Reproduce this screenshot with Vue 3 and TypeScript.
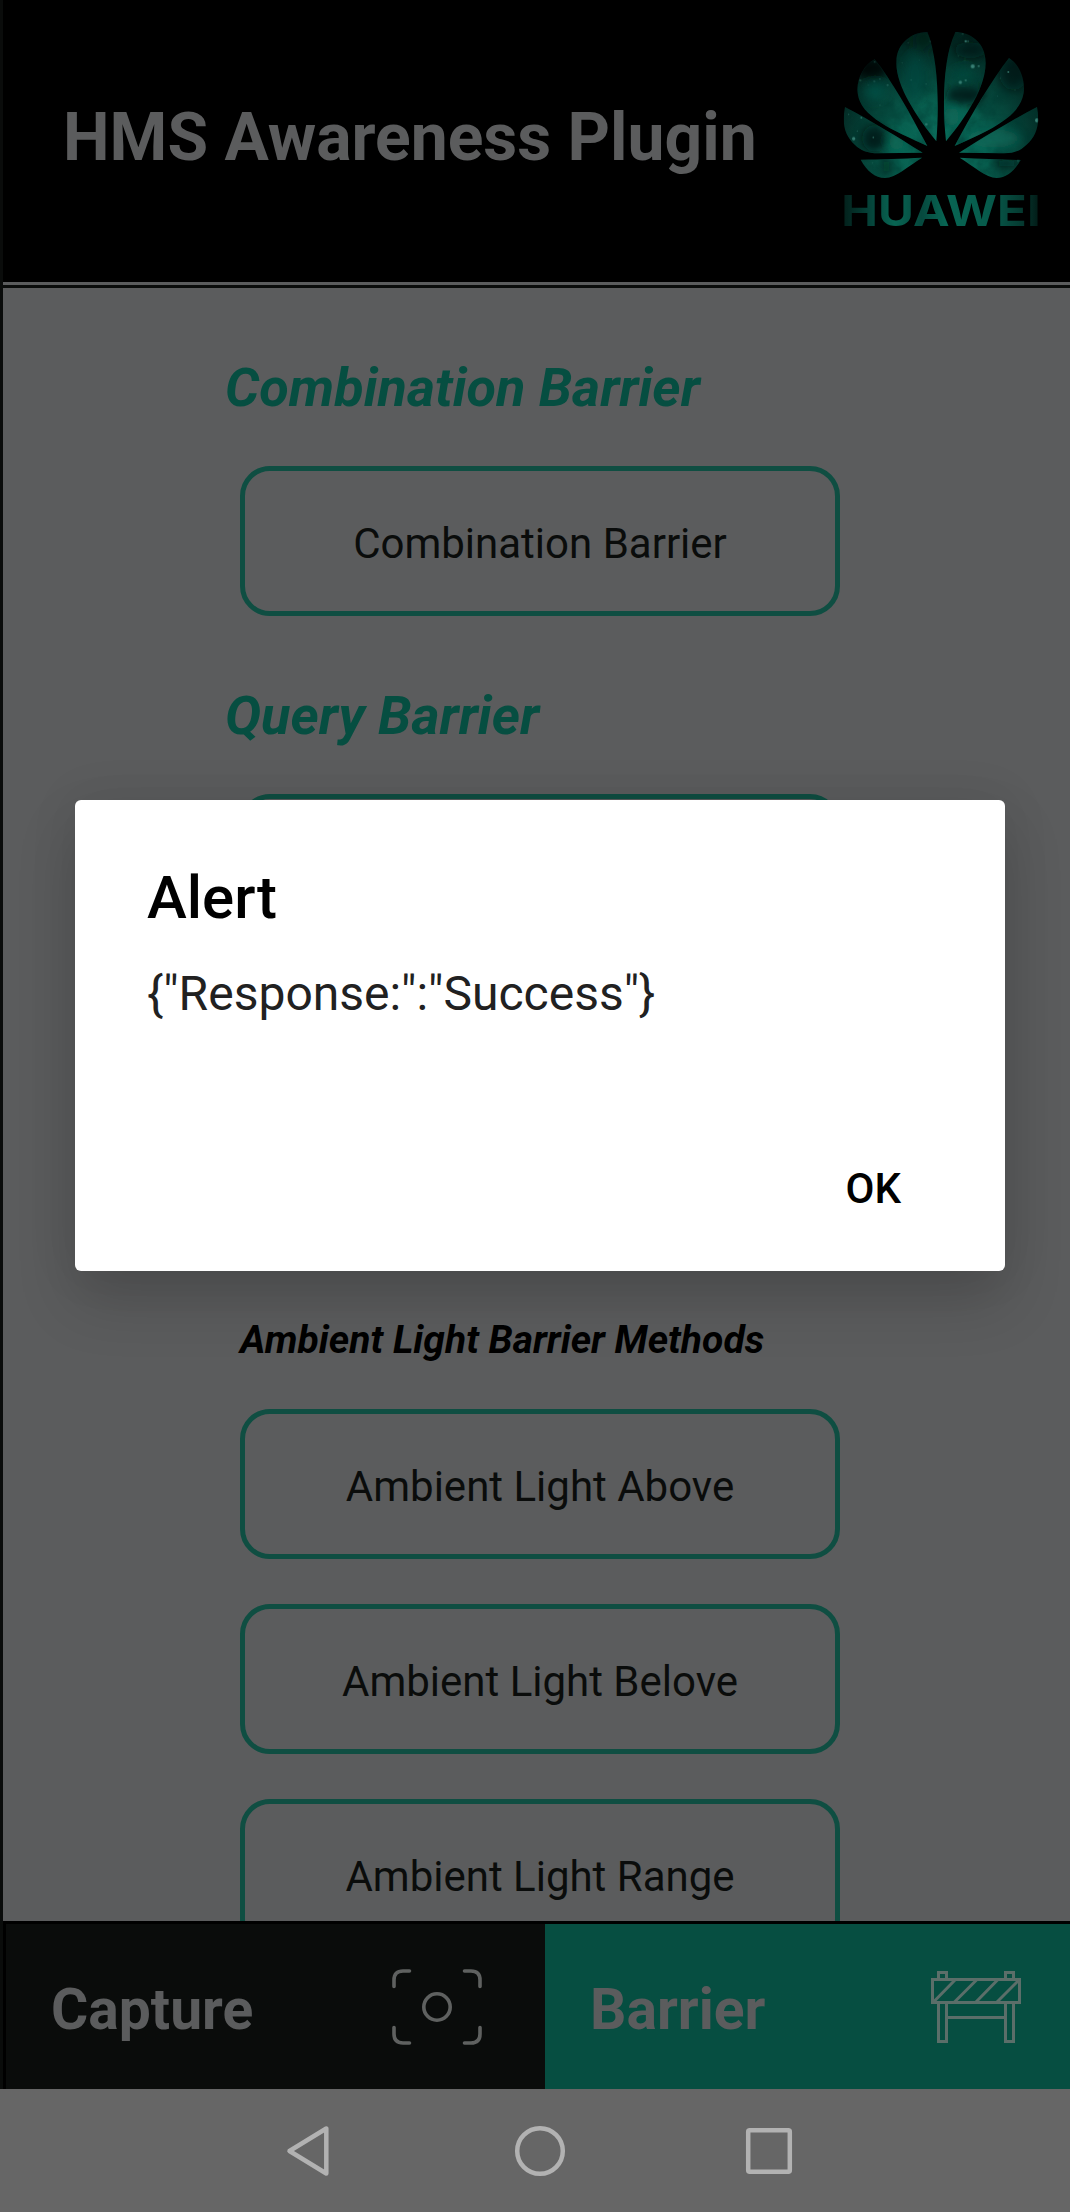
<script setup lang="ts">
interface Star {
  x: number
  y: number
  r: number
  o: number
}

const lightBarriers: string[] = ['Ambient Light Above', 'Ambient Light Belove', 'Ambient Light Range']

const petals: string[] = [
  'M349 394 C357 300 357 150 322 66 C280 66 228 95 229 160 C229 230 290 320 349 394 Z',
  'M378 394 C368 300 366 150 406 66 C448 66 498 95 497 160 C497 230 440 320 378 394 Z',
  'M322 408 C270 310 215 210 164 148 C130 165 108 210 113 250 C120 320 220 362 322 408 Z',
  'M404 408 C456 310 515 210 567 144 C600 165 616 210 611 250 C600 320 508 362 404 408 Z',
  'M308 428 C230 380 150 330 75 291 C66 340 72 375 105 405 C122 421 142 430 175 430 Z',
  'M417 428 C495 380 575 330 651 291 C660 340 652 375 619 405 C602 421 585 430 552 430 Z',
  'M306 443 C250 446 180 448 122 449 C140 482 165 504 195 504 C228 504 265 468 306 443 Z',
  'M419 443 C480 446 545 448 602 450 C584 482 560 504 530 504 C498 504 460 468 419 443 Z',
]

const stars: Star[] = [
  { x: 458, y: 169, r: 6, o: 0.9 },
  { x: 476, y: 168, r: 3, o: 0.8 },
  { x: 421, y: 217, r: 5, o: 0.8 },
  { x: 437, y: 211, r: 3, o: 0.7 },
  { x: 437, y: 94, r: 3.5, o: 0.8 },
  { x: 444, y: 94, r: 2.5, o: 0.8 },
  { x: 428, y: 72, r: 2, o: 0.6 },
  { x: 415, y: 138, r: 1.5, o: 0.5 },
  { x: 434, y: 152, r: 1.5, o: 0.5 },
  { x: 332, y: 94, r: 2.5, o: 0.7 },
  { x: 264, y: 98, r: 1.5, o: 0.5 },
  { x: 247, y: 158, r: 1.5, o: 0.5 },
  { x: 273, y: 210, r: 2, o: 0.5 },
  { x: 318, y: 222, r: 2, o: 0.5 },
  { x: 298, y: 150, r: 1.5, o: 0.4 },
  { x: 319, y: 343, r: 4, o: 0.6 },
  { x: 164, y: 156, r: 2, o: 0.6 },
  { x: 121, y: 211, r: 2.5, o: 0.7 },
  { x: 163, y: 214, r: 2.5, o: 0.6 },
  { x: 180, y: 207, r: 2, o: 0.6 },
  { x: 203, y: 225, r: 2.5, o: 0.6 },
  { x: 145, y: 225, r: 1.5, o: 0.5 },
  { x: 180, y: 286, r: 2, o: 0.4 },
  { x: 565, y: 186, r: 3, o: 0.7 },
  { x: 541, y: 204, r: 1.5, o: 0.4 },
  { x: 585, y: 240, r: 1.5, o: 0.4 },
  { x: 533, y: 258, r: 1.5, o: 0.4 },
  { x: 101, y: 386, r: 5, o: 0.8 },
  { x: 160, y: 382, r: 2.5, o: 0.6 },
  { x: 124, y: 323, r: 3, o: 0.6 },
  { x: 86, y: 313, r: 2, o: 0.5 },
  { x: 112, y: 363, r: 2, o: 0.5 },
  { x: 651, y: 331, r: 6, o: 0.9 },
  { x: 594, y: 453, r: 2, o: 0.6 },
  { x: 158, y: 459, r: 1.5, o: 0.5 },
]
</script>

<template>
  <div class="screen">
    <div class="app">
      <header class="header">
        <h1 class="title">HMS Awareness Plugin</h1>
        <svg class="logo" viewBox="0 0 750 816" role="img" aria-label="HUAWEI">
          <defs>
            <clipPath id="petal-clip">
              <path v-for="(d, i) in petals" :key="i" :d="d" />
            </clipPath>
            <radialGradient id="glow" gradientUnits="userSpaceOnUse" cx="363" cy="425" r="370">
              <stop offset="0" stop-color="#0b705e" />
              <stop offset="0.38" stop-color="#086050" />
              <stop offset="0.7" stop-color="#053c33" />
              <stop offset="1" stop-color="#021c18" />
            </radialGradient>
            <linearGradient id="word" gradientUnits="userSpaceOnUse" x1="70" y1="0" x2="657" y2="0">
              <stop offset="0" stop-color="#03201b" />
              <stop offset="0.14" stop-color="#05443a" />
              <stop offset="0.26" stop-color="#086553" />
              <stop offset="0.4" stop-color="#06493e" />
              <stop offset="0.52" stop-color="#086553" />
              <stop offset="0.76" stop-color="#075a4b" />
              <stop offset="0.92" stop-color="#05382f" />
              <stop offset="1" stop-color="#021a16" />
            </linearGradient>
            <filter id="soft" x="-50%" y="-50%" width="200%" height="200%">
              <feGaussianBlur stdDeviation="14" />
            </filter>
            <filter id="tiny" x="-50%" y="-50%" width="200%" height="200%">
              <feGaussianBlur stdDeviation="1" />
            </filter>
            <filter id="nebula" x="0" y="0" width="100%" height="100%">
              <feTurbulence type="fractalNoise" baseFrequency="0.018" numOctaves="4" seed="7" />
              <feColorMatrix values="0 0 0 0 0  0 0 0 0 0.04  0 0 0 0 0.03  2.4 0 0 0 -0.95" />
            </filter>
          </defs>
          <g clip-path="url(#petal-clip)">
            <rect x="60" y="50" width="610" height="470" fill="url(#glow)" />
            <rect x="60" y="50" width="610" height="470" filter="url(#nebula)" opacity="0.55" />
            <g filter="url(#soft)">
              <ellipse cx="155" cy="175" rx="50" ry="32" fill="#010807" opacity="0.8" />
              <ellipse cx="165" cy="385" rx="38" ry="40" fill="#021512" opacity="0.75" />
              <ellipse cx="450" cy="120" rx="50" ry="26" fill="#020f0d" opacity="0.6" />
              <ellipse cx="435" cy="255" rx="60" ry="28" fill="#02100d" opacity="0.75" />
              <ellipse cx="310" cy="90" rx="34" ry="34" fill="#031a16" opacity="0.6" />
              <ellipse cx="580" cy="190" rx="42" ry="50" fill="#021512" opacity="0.6" />
              <ellipse cx="560" cy="460" rx="36" ry="12" fill="#021512" opacity="0.7" />
              <ellipse cx="200" cy="470" rx="12" ry="26" fill="#021512" opacity="0.5" />
              <ellipse cx="285" cy="200" rx="34" ry="70" fill="#064a40" opacity="0.6" />
              <ellipse cx="165" cy="245" rx="34" ry="26" fill="#07564a" opacity="0.7" />
              <ellipse cx="430" cy="195" rx="36" ry="18" fill="#064a40" opacity="0.8" />
              <ellipse cx="520" cy="385" rx="80" ry="28" fill="#0a6a58" opacity="0.7" />
              <ellipse cx="230" cy="395" rx="24" ry="26" fill="#0a6a58" opacity="0.8" />
              <ellipse cx="395" cy="320" rx="24" ry="30" fill="#0a6a58" opacity="0.7" />
            </g>
            <g filter="url(#tiny)" fill="#3f8a7e">
              <circle v-for="(s, i) in stars" :key="i" :cx="s.x" :cy="s.y" :r="s.r" :opacity="s.o" />
            </g>
          </g>
          <text
            class="wordmark"
            x="64"
            y="648"
            textLength="598"
            lengthAdjust="spacingAndGlyphs"
            fill="url(#word)"
          >HUAWEI</text>
        </svg>
      </header>

      <main class="content">
        <h2 class="section-title">Combination Barrier</h2>
        <button class="action" type="button">Combination Barrier</button>
        <h2 class="section-title">Query Barrier</h2>
        <button class="action" type="button" aria-hidden="true"></button>
        <h3 class="group-title">Ambient Light Barrier Methods</h3>
        <div class="group">
          <button v-for="label in lightBarriers" :key="label" class="action" type="button">{{ label }}</button>
        </div>
      </main>

      <nav class="tabs">
        <div class="tab capture">
          <span>Capture</span>
          <svg width="92" height="78" viewBox="0 0 92 78" fill="none" stroke="#5f6160" stroke-width="3.6" stroke-linecap="round">
            <path d="M3 18.500V12Q3 3 12 3H18.500M73.500 3H80Q89 3 89 12V18.500M89 59.500V66Q89 75 80 75H73.500M18.500 75H12Q3 75 3 66V59.500" />
            <circle cx="46" cy="39" r="13.200" />
          </svg>
        </div>
        <div class="tab barrier">
          <span>Barrier</span>
          <svg width="90" height="72" viewBox="0 0 90 72" fill="none" stroke="#5b6e69" stroke-width="3">
            <path d="M1.500 8.500H88.500V31.500H1.500ZM7.500 8.500V1.500H15.500V8.500M74.500 8.500V1.500H82.500V8.500M7.500 31.500V70.500H15.500V31.500M74.500 31.500V70.500H82.500V31.500M15.500 46.500H74.500" />
            <path d="M2 31.500L24 9M23 31.500L45.500 9M44.500 31.500L66.500 9M65.500 31.500L88 9" />
          </svg>
        </div>
      </nav>
    </div>

    <div class="system-bar">
      <svg class="back" width="46" height="54" viewBox="0 0 46 54"><path d="M41.300 4.500V49.500L4.500 27Z" /></svg>
      <svg class="home" width="54" height="54" viewBox="0 0 54 54"><circle cx="27" cy="27" r="22.800" /></svg>
      <svg width="50" height="50" viewBox="0 0 50 50"><rect x="4.200" y="4.200" width="41.600" height="41.600" rx="1.500" /></svg>
    </div>

    <div class="dialog" role="alertdialog">
      <div class="dialog-title">Alert</div>
      <div class="dialog-message">{"Response:":"Success"}</div>
      <div class="dialog-actions">
        <button class="ok" type="button">OK</button>
      </div>
    </div>
  </div>
</template>

<style>
body {
  margin: 0;
  background: #666666;
}
</style>

<style scoped>
.screen {
  position: relative;
  width: 1070px;
  height: 2212px;
  overflow: hidden;
  display: flex;
  flex-direction: column;
  background: #666666;
  font-family: Roboto, "Liberation Sans", sans-serif;
}

.screen * {
  box-sizing: border-box;
}

.app {
  height: 2089px;
  border-left: 3px solid #0a0c0b;
  display: flex;
  flex-direction: column;
  background: #5b5c5d;
}

.header {
  height: 282px;
  flex: none;
  display: flex;
  justify-content: space-between;
  background: #000000;
}

.title {
  margin: 99px 0 0 60px;
  font-size: 66px;
  line-height: 78px;
  font-weight: 700;
  color: #5b5c5d;
  white-space: nowrap;
}

.logo {
  width: 250px;
  height: 272px;
  margin-top: 10px;
}

.wordmark {
  font-family: Inter, Roboto, sans-serif;
  font-weight: 700;
  font-size: 128px;
}

.content {
  height: 1636px;
  flex: none;
  margin-top: 3px;
  border-top: 3px solid #0a0c0b;
  padding-left: 222px;
  overflow: hidden;
}

.section-title {
  margin: 67px 0 46px;
  font-size: 54px;
  line-height: 65px;
  font-weight: 700;
  font-style: italic;
  color: #064e41;
}

.action {
  display: block;
  width: 600px;
  height: 150px;
  margin: 0 0 0 15px;
  padding: 5px 0 0;
  border: 5px solid #0f4e42;
  border-radius: 30px;
  background: transparent;
  font-family: inherit;
  font-size: 42px;
  line-height: 50px;
  color: #0a0c0b;
}

.group-title {
  margin: 373px 0 46px 15px;
  font-size: 39px;
  line-height: 46px;
  font-weight: 700;
  font-style: italic;
  color: #000000;
}

.group {
  display: flex;
  flex-direction: column;
  gap: 45px;
}

.group .action {
  flex: none;
}

.tabs {
  height: 168px;
  flex: none;
  display: flex;
  border-top: 3px solid #000000;
}

.tab {
  display: flex;
  align-items: center;
  justify-content: space-between;
  font-size: 57px;
  font-weight: 700;
  line-height: 68px;
  color: #5b5c5d;
}

.capture {
  width: 542px;
  padding: 0 62px 0 45px;
  border-left: 3px solid #000000;
  background: #0a0c0b;
}

.barrier {
  flex: 1;
  padding: 0 49px 0 45px;
  background: #064e41;
}

.tab span {
  padding-top: 7px;
}

.system-bar {
  height: 123px;
  display: flex;
  align-items: center;
  padding-left: 285px;
}

.system-bar svg {
  fill: none;
  stroke: #b2b2b2;
  stroke-width: 4.5;
  stroke-linejoin: round;
}

.back {
  margin-right: 182px;
}

.home {
  margin-right: 177px;
}

.dialog {
  position: absolute;
  left: 75px;
  top: 800px;
  width: 930px;
  height: 471px;
  padding: 63px 72px 0;
  border-radius: 6px;
  background: #ffffff;
  box-shadow: 0 30px 60px rgba(0, 0, 0, 0.16), 0 0 50px rgba(0, 0, 0, 0.08);
}

.dialog-title {
  font-size: 60px;
  line-height: 70px;
  font-weight: 500;
  color: #000000;
}

.dialog-message {
  margin-top: 33px;
  font-size: 48px;
  line-height: 56px;
  color: #212121;
}

.dialog-actions {
  display: flex;
  justify-content: flex-end;
  margin-top: 142px;
  padding-right: 32px;
}

.ok {
  padding: 0;
  border: 0;
  background: transparent;
  font-family: inherit;
  font-size: 42px;
  line-height: 50px;
  font-weight: 500;
  color: #000000;
}
</style>
